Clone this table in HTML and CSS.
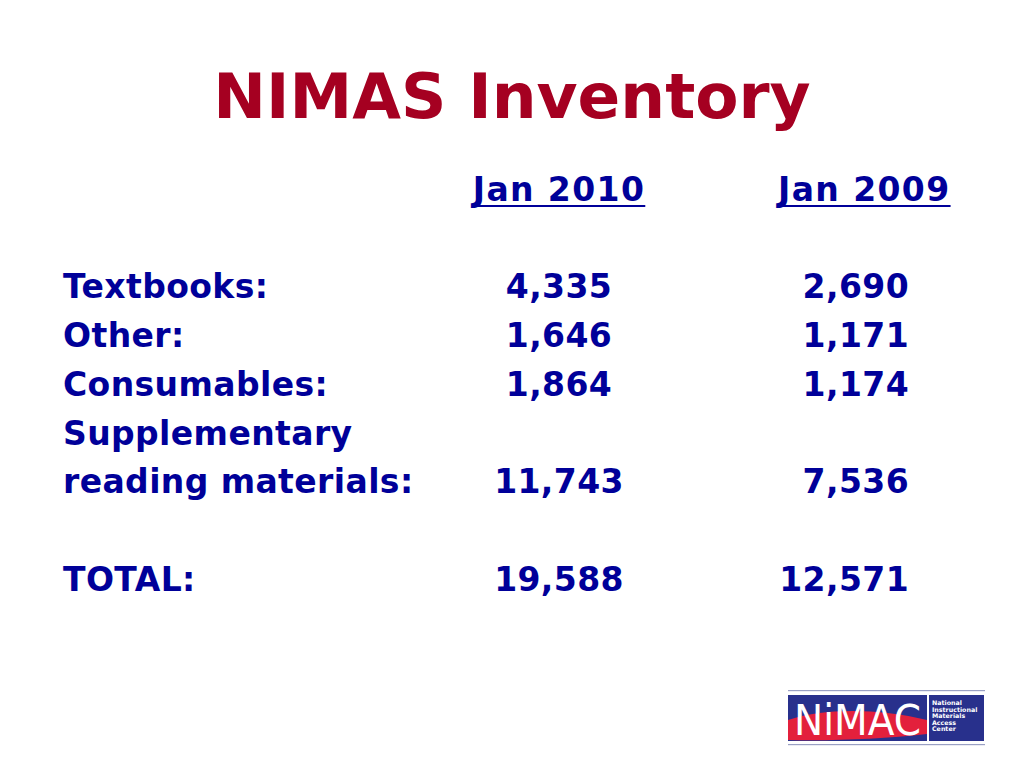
FILE: index.html
```html
<!DOCTYPE html>
<html>
<head>
<meta charset="utf-8">
<link rel="stylesheet" href="styles.css">
</head>
<body>
<div class="slide">
  <h1 class="title">NIMAS Inventory</h1>
  <div class="table">
    <div class="label"></div>
    <div class="c1 head">Jan 2010</div>
    <div class="c2 head">Jan 2009</div>

    <div class="label blank">&nbsp;</div><div class="c1"></div><div class="c2"></div>

    <div class="label">Textbooks:</div>
    <div class="c1">4,335</div>
    <div class="c2">2,690</div>

    <div class="label">Other:</div>
    <div class="c1">1,646</div>
    <div class="c2">1,171</div>

    <div class="label">Consumables:</div>
    <div class="c1">1,864</div>
    <div class="c2">1,174</div>

    <div class="label">Supplementary</div>
    <div class="c1"></div>
    <div class="c2"></div>

    <div class="label">reading materials:</div>
    <div class="c1">11,743</div>
    <div class="c2">7,536</div>

    <div class="label blank">&nbsp;</div><div class="c1"></div><div class="c2"></div>

    <div class="label">TOTAL:</div>
    <div class="c1">19,588</div>
    <div class="c2">12,571</div>
  </div>

  <div class="logo">
    <svg width="197" height="56" viewBox="0 0 197 56" xmlns="http://www.w3.org/2000/svg">
      <rect x="0" y="0" width="197" height="1.2" fill="#9aa0c4"/>
      <rect x="0" y="54" width="197" height="1.2" fill="#9aa0c4"/>
      <rect x="0" y="5" width="139" height="46" fill="#28308c"/>
      <path d="M0,30 C35,18 90,18 139,30 L139,44 C95,49 45,51 0,50 Z" fill="#e3203c"/>
      <text x="6" y="45" font-family="DejaVu Sans, sans-serif" font-size="43" fill="#ffffff" textLength="127" lengthAdjust="spacingAndGlyphs">NiMAC</text>
      <rect x="141" y="5" width="55" height="46" fill="#28308c"/>
      <g font-family="DejaVu Sans, sans-serif" font-weight="bold" font-size="6.3" fill="#ffffff">
        <text x="144" y="15">National</text>
        <text x="144" y="21.5">Instructional</text>
        <text x="144" y="28">Materials</text>
        <text x="144" y="34.5">Access</text>
        <text x="144" y="41">Center</text>
      </g>
    </svg>
  </div>
</div>
</body>
</html>
```
FILE: styles.css
```css
html, body {
  margin: 0;
  padding: 0;
  background: #ffffff;
}

.slide {
  width: 1024px;
  height: 768px;
  box-sizing: border-box;
  display: flex;
  flex-direction: column;
  background: #ffffff;
  font-family: "DejaVu Sans", Verdana, sans-serif;
  overflow: hidden;
}

.title {
  margin: 59px 0 0 0;
  font-size: 63px;
  line-height: 76px;
  font-weight: bold;
  color: #a50021;
  text-align: center;
}

.table {
  margin: 31px 0 0 63px;
  display: grid;
  grid-template-columns: 396px 200px 300px;
  font-size: 33px;
  line-height: 48.7px;
  font-weight: bold;
  color: #000099;
  letter-spacing: 0.4px;
}

.label {
  white-space: nowrap;
}

.c1 {
  text-align: center;
}

.c2 {
  text-align: right;
  padding-right: 50px;
}

.c2.head {
  text-align: left;
  padding-left: 119px;
  padding-right: 0;
}

.head {
  letter-spacing: 1.4px;
  text-decoration: underline;
  text-decoration-thickness: 2px;
  text-underline-offset: 4px;
  text-decoration-skip-ink: none;
  white-space: nowrap;
}

.logo {
  margin-top: auto;
  align-self: flex-end;
  margin-right: 39px;
  margin-bottom: 22px;
  line-height: 0;
}
```
